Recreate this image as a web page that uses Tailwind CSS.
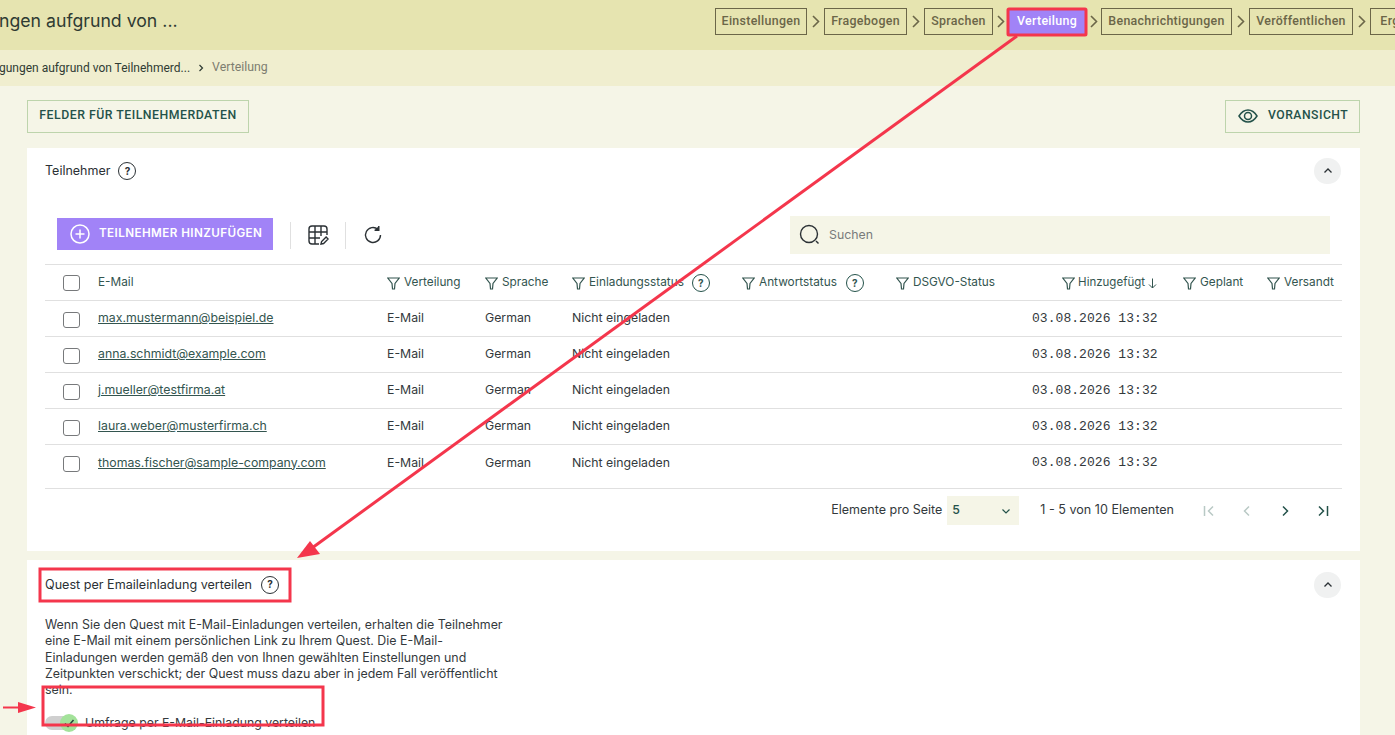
<!DOCTYPE html>
<html lang="de">

<head>
    <meta charset="UTF-8">
    <meta name="viewport" content="width=device-width, initial-scale=1.0">
    <title>Verteilung</title>
    <script src="https://cdn.jsdelivr.net/npm/@tailwindcss/browser@4"></script>
</head>

<body class="relative h-[735px] overflow-hidden bg-[#f5f5e7] font-['Inter',sans-serif] text-[12.3px] text-[#33393c]">
    <!-- top bar -->
    <header class="flex h-[50px] items-center justify-between overflow-hidden bg-[#e6e4b0] pb-[8px]">
        <h1 class="-ml-[1px] whitespace-nowrap text-[17.7px] text-[#2f3b33]">ngen aufgrund von ...</h1>
        <nav class="-mr-[60px] flex shrink-0 items-center font-['Roboto',sans-serif] text-[12.4px] font-medium tracking-[0.3px] text-[#6b6648]">
            <a class="flex h-[27px] w-[92px] items-center justify-center border border-[#6b6648]">Einstellungen</a>
            <span class="flex w-[17px] justify-center"><svg class="h-[13px] w-[8px]" viewBox="0 0 8 13" fill="none" stroke="#6b6648" stroke-width="1.6"><path d="M1 1l5.500 5.500L1 12" /></svg></span>
            <a class="flex h-[27px] w-[83px] items-center justify-center border border-[#6b6648]">Fragebogen</a>
            <span class="flex w-[17px] justify-center"><svg class="h-[13px] w-[8px]" viewBox="0 0 8 13" fill="none" stroke="#6b6648" stroke-width="1.6"><path d="M1 1l5.500 5.500L1 12" /></svg></span>
            <a class="flex h-[27px] w-[69px] items-center justify-center border border-[#6b6648]">Sprachen</a>
            <span class="flex w-[15px] justify-center"><svg class="h-[13px] w-[8px]" viewBox="0 0 8 13" fill="none" stroke="#6b6648" stroke-width="1.6"><path d="M1 1l5.500 5.500L1 12" /></svg></span>
            <a class="flex h-[27px] w-[78px] items-center justify-center bg-[#a183f7] text-white">Verteilung</a>
            <span class="flex w-[15px] justify-center"><svg class="h-[13px] w-[8px]" viewBox="0 0 8 13" fill="none" stroke="#6b6648" stroke-width="1.6"><path d="M1 1l5.500 5.500L1 12" /></svg></span>
            <a class="flex h-[27px] w-[131px] items-center justify-center border border-[#6b6648] whitespace-nowrap">Benachrichtigungen</a>
            <span class="flex w-[17px] justify-center"><svg class="h-[13px] w-[8px]" viewBox="0 0 8 13" fill="none" stroke="#6b6648" stroke-width="1.6"><path d="M1 1l5.500 5.500L1 12" /></svg></span>
            <a class="flex h-[27px] w-[104px] items-center justify-center border border-[#6b6648]">Veröffentlichen</a>
            <span class="flex w-[17px] justify-center"><svg class="h-[13px] w-[8px]" viewBox="0 0 8 13" fill="none" stroke="#6b6648" stroke-width="1.6"><path d="M1 1l5.500 5.500L1 12" /></svg></span>
            <a class="flex h-[27px] w-[85px] items-center justify-center border border-[#6b6648]">Ergebnisse</a>
        </nav>
    </header>

    <!-- breadcrumb -->
    <div class="flex h-[36px] items-center gap-[7px] bg-[#f0eecf] pb-[1px] font-['Roboto',sans-serif] text-[12px] whitespace-nowrap">
        <span class="-ml-[1px] text-[#2f3b33]">gungen aufgrund von Teilnehmerd...</span>
        <svg class="h-2 w-2" viewBox="0 0 8 8" fill="none" stroke="#2f3b33" stroke-width="1.2"><path d="M2.500 1l3 3-3 3" /></svg>
        <span class="text-[12.300px] text-[#7d7d70]">Verteilung</span>
    </div>

    <main class="pl-[27px] pr-[35px] pt-[14px]">
        <div class="flex items-center justify-between">
            <button class="h-[33px] w-[222px] border border-[#bdd4ac] pb-[2px] font-['Roboto',sans-serif] text-[12.300px] font-medium tracking-[0.5px] text-[#24524a]">FELDER FÜR TEILNEHMERDATEN</button>
            <button class="flex h-[33px] w-[135px] items-center gap-[10px] border border-[#bdd4ac] pb-[2px] pl-[12px] font-['Roboto',sans-serif] text-[12.200px] font-medium tracking-[0.5px] text-[#24524a]">
                <svg class="h-[20px] w-[20px]" viewBox="0 0 20 20" fill="none" stroke="#24524a" stroke-width="1.500"><path d="M1 10c2.500-4 5.500-6 9-6s6.500 2 9 6c-2.500 4-5.500 6-9 6s-6.500-2-9-6z" /><circle cx="10" cy="10" r="3.500" /></svg>
                VORANSICHT
            </button>
        </div>

        <!-- participants card -->
        <section class="mt-[15px] h-[403px] bg-white">
            <div class="flex h-[46px] items-center justify-between pl-[18px] pr-[19px]">
                <div class="flex items-center gap-[8px] text-[12.500px] text-[#2b3135]">
                    Teilnehmer
                    <span class="flex h-[18px] w-[18px] items-center justify-center rounded-full border-[1.500px] border-[#2b3135] text-[10px] font-bold">?</span>
                </div>
                <button class="flex h-[26px] w-[27px] items-center justify-center rounded-full bg-[#f0f1f1]">
                    <svg class="h-3 w-3" viewBox="0 0 12 12" fill="none" stroke="#2b3135" stroke-width="1.300"><path d="M2.500 7.500L6 4l3.500 3.500" /></svg>
                </button>
            </div>

            <div class="mt-[22px] flex h-[38px] items-center pl-[30px] pr-[30px]">
                <button class="mb-[2px] flex h-[32px] w-[216px] items-center gap-[9px] bg-[#a183f7] pl-[13px] text-[11.700px] font-semibold tracking-[0.4px] text-white">
                    <svg class="h-[20px] w-[20px]" viewBox="0 0 20 20" fill="none" stroke="white" stroke-width="1.500"><circle cx="10" cy="10" r="9" /><path d="M10 5.500v9M5.500 10h9" /></svg>
                    TEILNEHMER HINZUFÜGEN
                </button>
                <span class="ml-[17px] h-[27px] w-px bg-[#e0e0e0]"></span>
                <svg class="ml-[16px] h-[22px] w-[22px]" viewBox="0 0 22 22" fill="none" stroke="#2b3135" stroke-width="1.400"><path d="M12 20H5a3 3 0 0 1-3-3V5a3 3 0 0 1 3-3h12a3 3 0 0 1 3 3v6" /><path d="M2 8h18M2 14h11M8 2v18M14 2v10" /><path d="M14 20l.6-2.500 4.500-4.500 2 2-4.500 4.500z" /></svg>
                <span class="ml-[16px] h-[27px] w-px bg-[#e0e0e0]"></span>
                <svg class="ml-[17px] h-[20px] w-[20px]" viewBox="0 0 20 20" fill="none" stroke="#2b3135" stroke-width="1.400"><path d="M17.500 10a7.500 7.500 0 1 1-2.500-5.600" /><path d="M15.800 1v4.200h-4.200" fill="#2b3135" /></svg>
                <div class="ml-auto flex h-[38px] w-[540px] items-center bg-[#f5f5e7] pl-[9px] text-[#787b7b]">
                    <svg class="h-[22px] w-[22px]" viewBox="0 0 22 22" fill="none" stroke="#2b3135" stroke-width="1.400"><circle cx="10" cy="10" r="8.500" /><path d="M17 17l2.500 2.500" /></svg>
                    <span class="ml-[8px]">Suchen</span>
                </div>
            </div>

            <div class="mx-[18px] mt-[10px] w-[1297px]">
                <table class="w-full table-fixed border-collapse text-left">
                    <thead class="text-[11.800px] text-[#33554f]">
                        <tr class="h-[36px] border-y border-[#e0e0e0]">
                            <th class="w-[53px] pl-[18px] font-normal"><span class="block h-[16px] w-[17px] rounded-[3px] border border-[#77797b]"></span></th>
                            <th class="w-[289px] pt-[1px] font-normal">E-Mail</th>
                            <th class="w-[98px] pt-[1px] font-normal"><span class="flex items-center gap-[4px]"><svg class="h-[13px] w-[13px]" viewBox="0 0 13 13" fill="none" stroke="#33554f" stroke-width="1.200"><path d="M.800 1h11.400L8 6.500 7.500 12h-2L5 6.500z" /></svg>Verteilung</span></th>
                            <th class="w-[87px] pt-[1px] font-normal"><span class="flex items-center gap-[4px]"><svg class="h-[13px] w-[13px]" viewBox="0 0 13 13" fill="none" stroke="#33554f" stroke-width="1.200"><path d="M.800 1h11.400L8 6.500 7.500 12h-2L5 6.500z" /></svg>Sprache</span></th>
                            <th class="w-[170px] pt-[1px] font-normal"><span class="flex items-center gap-[4px]"><svg class="h-[13px] w-[13px]" viewBox="0 0 13 13" fill="none" stroke="#33554f" stroke-width="1.200"><path d="M.800 1h11.400L8 6.500 7.500 12h-2L5 6.500z" /></svg>Einladungsstatus<span class="ml-[4px] flex h-[18px] w-[18px] items-center justify-center rounded-full border-[1.500px] border-[#24524a] text-[10px] font-bold">?</span></span></th>
                            <th class="w-[154px] pt-[1px] font-normal"><span class="flex items-center gap-[4px]"><svg class="h-[13px] w-[13px]" viewBox="0 0 13 13" fill="none" stroke="#33554f" stroke-width="1.200"><path d="M.800 1h11.400L8 6.500 7.500 12h-2L5 6.500z" /></svg>Antwortstatus<span class="ml-[5px] flex h-[18px] w-[18px] items-center justify-center rounded-full border-[1.500px] border-[#24524a] text-[10px] font-bold">?</span></span></th>
                            <th class="w-[136px] pt-[1px] font-normal"><span class="flex items-center gap-[4px]"><svg class="h-[13px] w-[13px]" viewBox="0 0 13 13" fill="none" stroke="#33554f" stroke-width="1.200"><path d="M.800 1h11.400L8 6.500 7.500 12h-2L5 6.500z" /></svg>DSGVO-Status</span></th>
                            <th class="w-[151px] pr-[26px] pt-[1px] font-normal"><span class="flex items-center justify-end gap-[3px]"><svg class="h-[13px] w-[13px]" viewBox="0 0 13 13" fill="none" stroke="#33554f" stroke-width="1.200"><path d="M.800 1h11.400L8 6.500 7.500 12h-2L5 6.500z" /></svg><span class="text-[11.500px]">Hinzugefügt</span><svg class="h-[11px] w-[9px]" viewBox="0 0 9 11" fill="none" stroke="#33554f"><path d="M4.500 .5v9.500M1 6.500L4.500 10 8 6.500" /></svg></span></th>
                            <th class="w-[84px] pt-[1px] font-normal"><span class="flex items-center gap-[4px]"><svg class="h-[13px] w-[13px]" viewBox="0 0 13 13" fill="none" stroke="#33554f" stroke-width="1.200"><path d="M.800 1h11.400L8 6.500 7.500 12h-2L5 6.500z" /></svg>Geplant</span></th>
                            <th class="pt-[1px] font-normal"><span class="flex items-center gap-[4px]"><svg class="h-[13px] w-[13px]" viewBox="0 0 13 13" fill="none" stroke="#33554f" stroke-width="1.200"><path d="M.800 1h11.400L8 6.500 7.500 12h-2L5 6.500z" /></svg>Versandt</span></th>
                        </tr>
                    </thead>
                    <tbody id="rows"></tbody>
                </table>
                <div class="h-[8px] border-b border-[#e0e0e0]"></div>

                <div class="flex h-[44px] items-center justify-end pr-[13px]">
                    <span class="text-[12.500px]">Elemente pro Seite</span>
                    <span class="ml-[5px] flex h-[29px] w-[72px] items-center justify-between bg-[#f5f5e7] pl-[5px] pr-[7px] font-medium text-[#24524a]">5<svg class="h-3 w-3" viewBox="0 0 12 12" fill="none" stroke="#24524a" stroke-width="1.200"><path d="M2.500 4.500L6 8l3.500-3.500" /></svg></span>
                    <span class="ml-[21px] text-[12.600px]">1 - 5 von 10 Elementen</span>
                    <svg class="ml-[29px] h-3 w-3" viewBox="0 0 12 12" fill="none" stroke="#b9c9c5" stroke-width="1.500"><path d="M1.500 1v10M10 1.500L5.500 6l4.500 4.500" /></svg>
                    <svg class="ml-[26px] h-3 w-3" viewBox="0 0 12 12" fill="none" stroke="#b9c9c5" stroke-width="1.500"><path d="M8 1.500L3.500 6 8 10.500" /></svg>
                    <svg class="ml-[26px] h-3 w-3" viewBox="0 0 12 12" fill="none" stroke="#24524a" stroke-width="1.500"><path d="M4 1.500L8.500 6 4 10.500" /></svg>
                    <svg class="ml-[26px] h-3 w-3" viewBox="0 0 12 12" fill="none" stroke="#24524a" stroke-width="1.500"><path d="M2 1.500L6.500 6 2 10.500M10.500 1v10" /></svg>
                </div>
            </div>
        </section>

        <!-- distribution card -->
        <section class="mt-[9px] h-[200px] bg-white pl-[18px] pr-[19px]">
            <div class="flex h-[50px] items-center justify-between">
                <div class="flex items-center gap-[9px] text-[12.600px] text-[#2b3135]">
                    Quest per Emaileinladung verteilen
                    <span class="flex h-[18px] w-[18px] items-center justify-center rounded-full border-[1.500px] border-[#2b3135] text-[10px] font-bold">?</span>
                </div>
                <button class="flex h-[26px] w-[27px] items-center justify-center rounded-full bg-[#f0f1f1]">
                    <svg class="h-3 w-3" viewBox="0 0 12 12" fill="none" stroke="#2b3135" stroke-width="1.300"><path d="M2.500 7.500L6 4l3.500 3.500" /></svg>
                </button>
            </div>
            <p class="mt-[7px] w-[470px] text-[12.400px] leading-[16.300px]">Wenn Sie den Quest mit E-Mail-Einladungen verteilen, erhalten die Teilnehmer eine E-Mail mit einem persönlichen Link zu Ihrem Quest. Die E-Mail-Einladungen werden gemäß den von Ihnen gewählten Einstellungen und Zeitpunkten verschickt; der Quest muss dazu aber in jedem Fall veröffentlicht sein.</p>
            <div class="mt-[13px] flex h-[24px] items-center">
                <span class="relative h-[14px] w-[30px] rounded-full bg-[#cfcfcf]">
                    <span class="absolute -right-[3px] -top-[2px] flex h-[18px] w-[18px] items-center justify-center rounded-full bg-[#a3e29a]">
                        <svg class="h-3 w-3" viewBox="0 0 12 12" fill="none" stroke="#24423a" stroke-width="1.500"><path d="M2 6.500L5 9.500 10.500 3" /></svg>
                    </span>
                </span>
                <span class="ml-[10px]">Umfrage per E-Mail-Einladung verteilen</span>
            </div>
        </section>
    </main>

    <!-- red annotations drawn over the screenshot -->
    <svg class="pointer-events-none absolute left-0 top-0" width="1395" height="735" fill="none" stroke="#f4364c">
        <rect x="1008" y="9" width="78" height="26" rx="1" stroke-width="3" />
        <rect x="40" y="569" width="250" height="32" stroke-width="3" />
        <rect x="43" y="687" width="280" height="38" stroke-width="3" />
        <path d="M1017 36L312 548" stroke-width="3" />
        <path d="M297 558L310 541 320 554z" fill="#f4364c" stroke="none" />
        <path d="M3 707.500H20" stroke-width="2" />
        <path d="M36 707.500L18 702V713z" fill="#f4364c" stroke="none" />
    </svg>

    <script>
        const participants = [
            "max.mustermann@beispiel.de",
            "anna.schmidt@example.com",
            "j.mueller@testfirma.at",
            "laura.weber@musterfirma.ch",
            "thomas.fischer@sample-company.com"
        ];

        const rows = document.getElementById('rows');
        participants.forEach((email, i) => {
            const row = document.createElement('tr');
            row.className = i === 4 ? 'h-[36px]' : 'h-[36px] border-b border-[#e0e0e0]';
            row.innerHTML = `
                <td class="pl-[18px]"><span class="mt-[3px] block h-[16px] w-[17px] rounded-[3px] border border-[#77797b]"></span></td>
                <td><a class="text-[#33554f] underline">${email}</a></td>
                <td>E-Mail</td>
                <td>German</td>
                <td>Nicht eingeladen</td>
                <td></td>
                <td></td>
                <td class="font-['Liberation_Mono',monospace] text-[13px] tracking-[0.05px] whitespace-nowrap">03.08.2026 13:32</td>
                <td></td>
                <td></td>`;
            rows.appendChild(row);
        });
    </script>
</body>

</html>
